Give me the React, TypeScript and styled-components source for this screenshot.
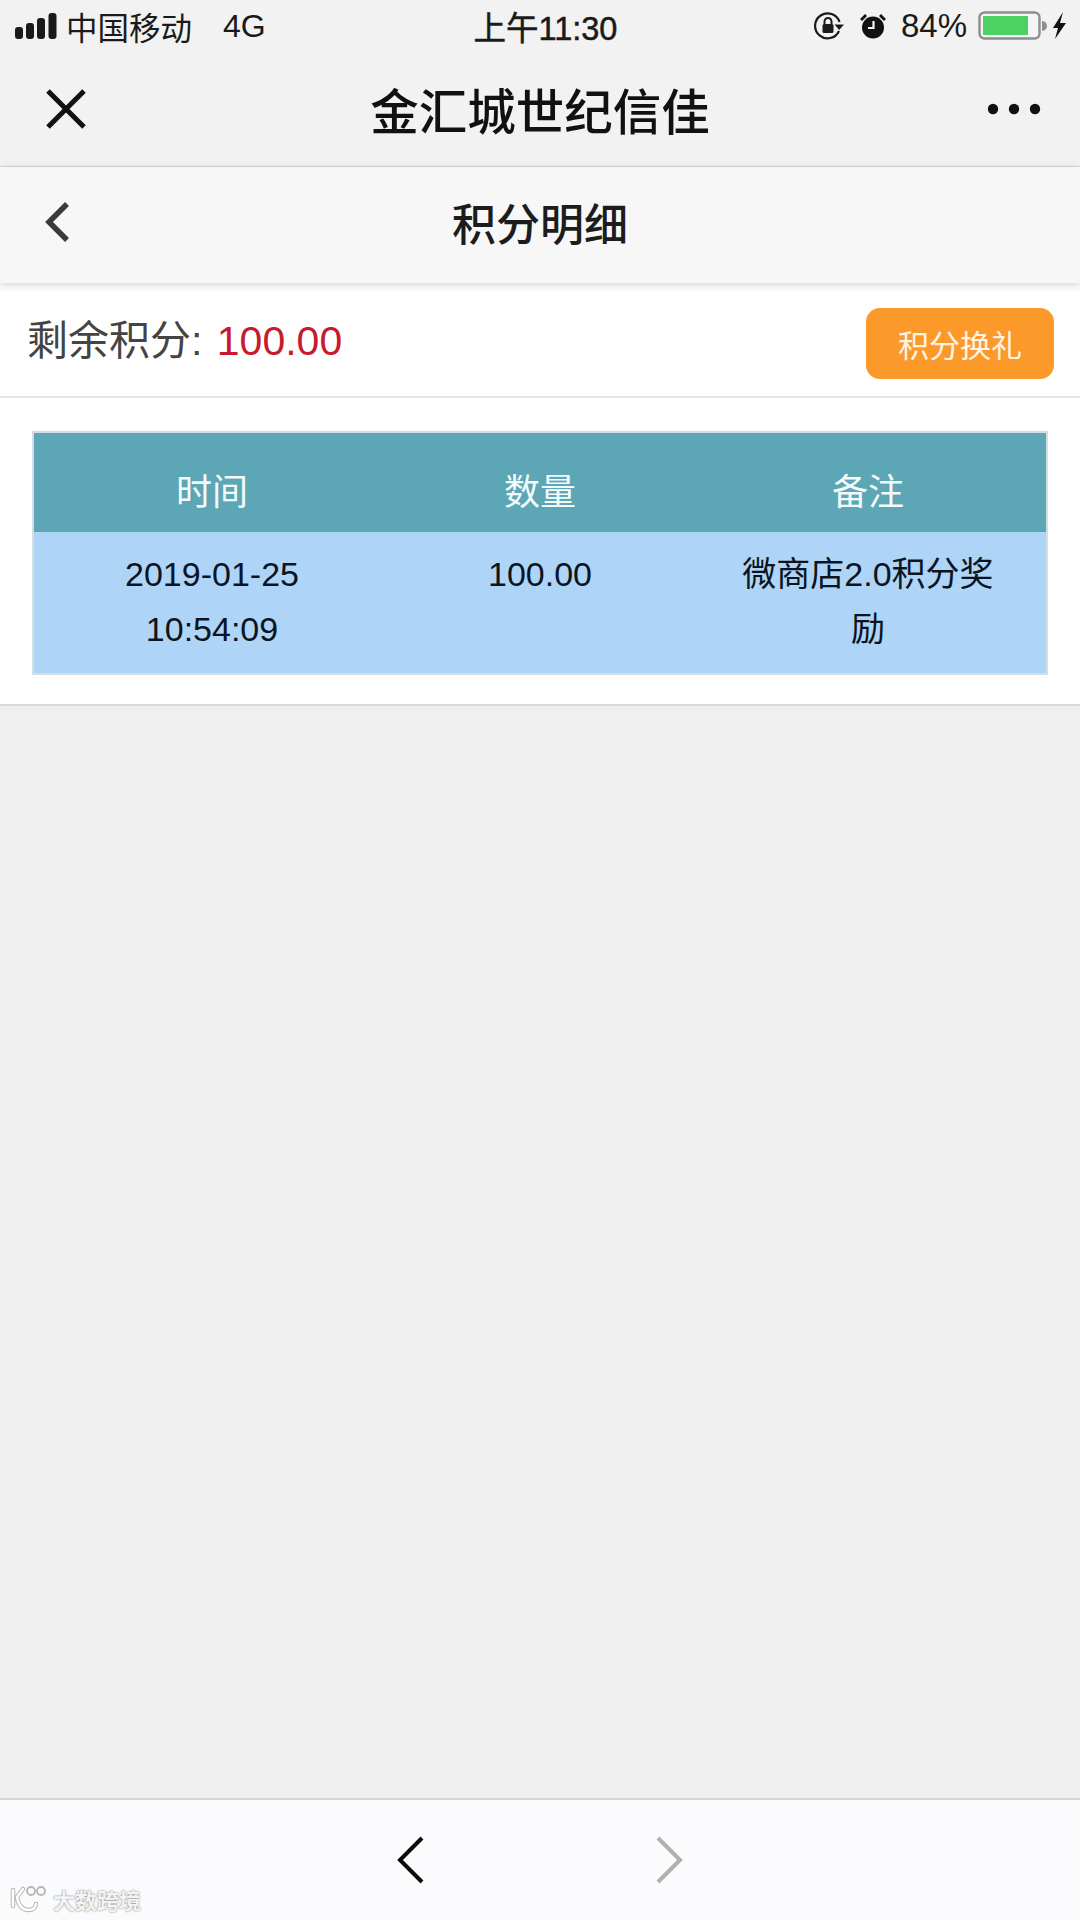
import { FC } from 'react'
import styled, { createGlobalStyle } from 'styled-components'

const FONT = '"Liberation Sans", "Noto Sans CJK SC", sans-serif'

const App: FC = () => {
  return (
    <Page>
      <GlobalStyle />
      <TopBar>
        <StatusBar>
          <StatusLeft>
            <SignalIcon />
            <Carrier>中国移动</Carrier>
            <Network>4G</Network>
          </StatusLeft>
          <Clock>上午11:30</Clock>
          <StatusRight>
            <RotationLockIcon />
            <AlarmIcon />
            <BatteryText>84%</BatteryText>
            <BatteryIcon />
          </StatusRight>
        </StatusBar>
        <NavBar>
          <CloseButton>
            <CloseIcon />
          </CloseButton>
          <NavTitle>金汇城世纪信佳</NavTitle>
          <MoreButton>
            <MoreIcon />
          </MoreButton>
        </NavBar>
      </TopBar>

      <SubHeader>
        <BackIcon />
        <SubTitle>积分明细</SubTitle>
      </SubHeader>

      <PointsRow>
        <PointsLabel>
          剩余积分: <PointsValue>100.00</PointsValue>
        </PointsLabel>
        <ExchangeButton>积分换礼</ExchangeButton>
      </PointsRow>

      <TableSection>
        <Table>
          <HeadRow>
            <HeadCell>时间</HeadCell>
            <HeadCell>数量</HeadCell>
            <HeadCell>备注</HeadCell>
          </HeadRow>
          <BodyRow>
            <BodyCell>2019-01-25 10:54:09</BodyCell>
            <BodyCell>100.00</BodyCell>
            <BodyCell>微商店2.0积分奖励</BodyCell>
          </BodyRow>
        </Table>
      </TableSection>

      <Spacer />

      <Footer>
        <FooterNav>
          <ChevronLeft />
          <ChevronRight />
        </FooterNav>
        <Watermark>
          <WatermarkLogo />
          <WatermarkText>大数跨境</WatermarkText>
        </Watermark>
      </Footer>
    </Page>
  )
}

const SignalIcon: FC = () => (
  <svg width="42" height="27" viewBox="0 0 42 27">
    <rect x="0" y="14" width="8" height="12" rx="3" fill="#1a1a1a" />
    <rect x="11" y="10" width="8" height="16" rx="3" fill="#1a1a1a" />
    <rect x="22" y="5" width="8" height="21" rx="3" fill="#1a1a1a" />
    <rect x="33.5" y="0" width="8" height="26" rx="3" fill="#1a1a1a" />
  </svg>
)

const RotationLockIcon: FC = () => (
  <svg width="32" height="30" viewBox="0 0 32 30">
    <path d="M26 20 A12.5 12.5 0 1 1 26.5 11" fill="none" stroke="#1a1a1a" strokeWidth="2.2" />
    <path d="M21.5 13.5 H31 L26.2 19 Z" fill="#1a1a1a" />
    <rect x="9.5" y="13" width="11" height="9" rx="1.5" fill="#1a1a1a" />
    <path d="M11.5 13 V10.5 a3.5 3.5 0 0 1 7 0 V13" fill="none" stroke="#1a1a1a" strokeWidth="2" />
  </svg>
)

const AlarmIcon: FC = () => (
  <svg width="28" height="28" viewBox="0 0 28 28">
    <circle cx="14" cy="15.5" r="11" fill="#111" />
    <path d="M1 7 L6 2 L8 4 L3 9 Z M27 7 L22 2 L20 4 L25 9 Z" fill="#111" />
    <path d="M14.5 9 V16 H9" fill="none" stroke="#f2f2f2" strokeWidth="2.2" />
  </svg>
)

const BatteryIcon: FC = () => (
  <svg width="90" height="30" viewBox="0 0 90 30">
    <rect x="1.5" y="1.5" width="60" height="26" rx="5" fill="#f4f4f4" stroke="#8e8e8e" strokeWidth="2.4" />
    <rect x="5" y="5" width="45" height="19" fill="#4cd263" />
    <path d="M64 10 a5 5 0 0 1 0 10 Z" fill="#8e8e8e" />
    <path d="M85 1 L75 17 H80 L77 28 L88 12 H82 Z" fill="#111" />
  </svg>
)

const CloseIcon: FC = () => (
  <svg width="42" height="42" viewBox="0 0 42 42">
    <path d="M3 3 L39 39 M39 3 L3 39" stroke="#111" strokeWidth="5" />
  </svg>
)

const MoreIcon: FC = () => (
  <svg width="54" height="12" viewBox="0 0 54 12">
    <circle cx="6" cy="6" r="5.2" fill="#111" />
    <circle cx="27" cy="6" r="5.2" fill="#111" />
    <circle cx="48" cy="6" r="5.2" fill="#111" />
  </svg>
)

const BackIcon: FC = () => (
  <svg width="26" height="40" viewBox="0 0 26 40">
    <path d="M22 2 L4 20 L22 38" fill="none" stroke="#3a3a3a" strokeWidth="5.5" />
  </svg>
)

const ChevronLeft: FC = () => (
  <svg width="28" height="48" viewBox="0 0 28 48">
    <path d="M25 2 L3 24 L25 46" fill="none" stroke="#0a0a0a" strokeWidth="4" />
  </svg>
)

const ChevronRight: FC = () => (
  <svg width="28" height="48" viewBox="0 0 28 48">
    <path d="M3 2 L25 24 L3 46" fill="none" stroke="#b0b0b0" strokeWidth="4" />
  </svg>
)

const WatermarkLogo: FC = () => (
  <svg width="40" height="30" viewBox="0 0 40 30">
    <path
      d="M4 6 V22 M14 5 L8 13 Q10 26 20 26 Q26 26 27 20"
      fill="none"
      stroke="#b5b5b5"
      strokeWidth="4.5"
      strokeLinecap="round"
    />
    <path
      d="M4 6 V22 M14 5 L8 13 Q10 26 20 26 Q26 26 27 20"
      fill="none"
      stroke="#fff"
      strokeWidth="2.5"
      strokeLinecap="round"
    />
    <circle cx="22" cy="7" r="4" fill="none" stroke="#b5b5b5" strokeWidth="1.8" />
    <circle cx="32" cy="7" r="4" fill="none" stroke="#b5b5b5" strokeWidth="1.8" />
  </svg>
)

const GlobalStyle = createGlobalStyle`
  html, body {
    margin: 0;
    padding: 0;
    background: #efeff0;
  }
  * {
    box-sizing: border-box;
  }
`

const Page = styled.div`
  display: flex;
  flex-direction: column;
  width: 1080px;
  height: 1920px;
  overflow: hidden;
  font-family: ${FONT};
  background: #efeff0;
`

const TopBar = styled.header`
  height: 167px;
  background: #f2f2f2;
  border-bottom: 1px solid #d8d8d8;
`

const StatusBar = styled.div`
  display: grid;
  grid-template-columns: 1fr auto 1fr;
  align-items: center;
  height: 54px;
  padding: 0 12px 2px 15px;
  color: #1a1a1a;
`

const StatusLeft = styled.div`
  display: flex;
  align-items: center;
  gap: 9px;
`

const Carrier = styled.span`
  font-size: 31.5px;
`

const Network = styled.span`
  margin-left: 22px;
  font-size: 32px;
`

const Clock = styled.span`
  margin-top: -2px;
  padding-left: 8px;
  font-size: 32.5px;
  -webkit-text-stroke: 0.5px #1a1a1a;
`

const StatusRight = styled.div`
  display: flex;
  align-items: center;
  justify-content: flex-end;
  gap: 14px;
`

const BatteryText = styled.span`
  margin-right: -3px;
  font-size: 33px;
`

const NavBar = styled.div`
  display: grid;
  grid-template-columns: 1fr auto 1fr;
  align-items: center;
  height: 112px;
  padding: 0 39px 2px;
`

const CloseButton = styled.div`
  display: flex;
  padding-left: 6px;
`

const NavTitle = styled.h1`
  margin: 0;
  font-size: 48.5px;
  font-weight: 500;
  color: #111;
`

const MoreButton = styled.div`
  display: flex;
  justify-content: flex-end;
`

const SubHeader = styled.div`
  position: relative;
  z-index: 1;
  display: grid;
  grid-template-columns: 1fr auto 1fr;
  align-items: center;
  height: 116px;
  padding: 0 45px 7px;
  background: #f7f7f7;
  box-shadow: 0 2px 8px rgba(0, 0, 0, 0.18);
`

const SubTitle = styled.h2`
  margin: 0;
  font-size: 44px;
  font-weight: 500;
  color: #1c1c1c;
`

const PointsRow = styled.div`
  display: flex;
  align-items: center;
  justify-content: space-between;
  height: 115px;
  padding: 0 26px 0 27px;
  background: #fff;
  border-bottom: 2px solid #e6e6e6;
`

const PointsLabel = styled.div`
  margin-top: -6px;
  font-size: 41px;
  color: #444;
`

const PointsValue = styled.span`
  margin-left: 3px;
  color: #c8192e;
`

const ExchangeButton = styled.button`
  width: 188px;
  height: 71px;
  margin-top: 7px;
  border: none;
  border-radius: 14px;
  background: #fb9a2a;
  font-family: inherit;
  font-size: 31px;
  color: #fff3e4;
`

const TableSection = styled.section`
  height: 308px;
  padding: 33px 32px 0;
  background: #fff;
  border-bottom: 2px solid #d9d9d9;
`

const Table = styled.div`
  border: 2px solid #d4dde2;
`

const HeadRow = styled.div`
  display: grid;
  grid-template-columns: 356px 300px 1fr;
  align-items: center;
  height: 99px;
  padding-top: 12px;
  background: #5ca6b5;
`

const HeadCell = styled.div`
  font-size: 36px;
  color: #f4fafa;
  text-align: center;
`

const BodyRow = styled.div`
  display: grid;
  grid-template-columns: 356px 300px 1fr;
  height: 141px;
  padding-top: 15px;
  background: #aed4f7;
`

const BodyCell = styled.div`
  padding: 0 50px;
  font-size: 34px;
  line-height: 55px;
  color: #0b1420;
  text-align: center;
`

const Spacer = styled.div`
  flex: 1;
`

const Footer = styled.footer`
  position: relative;
  height: 122px;
  background: #fbfbfd;
  border-top: 2px solid #d4d4d8;
`

const FooterNav = styled.nav`
  display: flex;
  justify-content: center;
  align-items: center;
  gap: 230px;
  height: 100%;
`

const Watermark = styled.div`
  position: absolute;
  left: 9px;
  bottom: 5px;
  display: flex;
  align-items: center;
  gap: 4px;
`

const WatermarkText = styled.span`
  font-size: 22px;
  font-weight: 700;
  color: #f4f4f4;
  text-shadow: 0 0 2px #6f6f6f;
`

export default App
